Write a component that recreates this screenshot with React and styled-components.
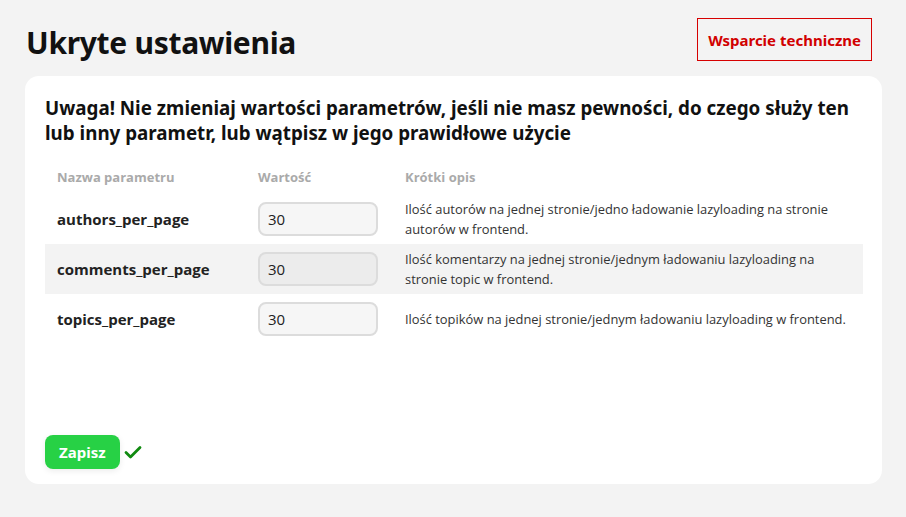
import React from "react";
import styled, { createGlobalStyle } from "styled-components";

const Global = createGlobalStyle`
  html, body { margin: 0; padding: 0; background: #f3f3f3; }
  body { font-family: "Open Sans", "Noto Sans", sans-serif; color: #111; }
`;

const Page = styled.div`
  padding: 18px 24px 32px 25px;
  display: flex;
  flex-direction: column;
`;

const Header = styled.header`
  display: flex;
  justify-content: space-between;
  align-items: flex-start;
  height: 58px;
  padding-right: 10px;
`;

const Title = styled.h1`
  margin: 6px 0 0 1px;
  font-family: "Noto Sans", "Open Sans", sans-serif;
  font-weight: 700;
  font-size: 30px;
  line-height: 38px;
  letter-spacing: -0.3px;
  color: #111;
`;

const SupportButton = styled.button`
  height: 43px;
  padding: 0 10px;
  border: 1px solid #d60000;
  background: transparent;
  color: #d10000;
  font-family: "Noto Sans", "Open Sans", sans-serif;
  font-weight: 700;
  font-size: 15px;
  cursor: pointer;
`;

const Card = styled.main`
  background: #fff;
  border-radius: 14px;
  padding: 20px 19px 15px 20px;
  height: 408px;
  box-sizing: border-box;
  display: flex;
  flex-direction: column;
`;

const Warning = styled.h2`
  margin: 0 0 14px 0;
  font-family: "Noto Sans", "Open Sans", sans-serif;
  font-weight: 700;
  font-size: 18.8px;
  line-height: 25px;
  color: #111;
`;

const Table = styled.div`
  display: flex;
  flex-direction: column;
`;

const Row = styled.div`
  display: grid;
  grid-template-columns: 201px 147px 1fr;
  align-items: center;
  min-height: ${(p) => (p.$head ? "34px" : "50px")};
  padding-left: 12px;
  background: ${(p) => (p.$alt ? "#f3f3f3" : "transparent")};
`;

const HeadCell = styled.div`
  font-size: 13px;
  font-weight: 700;
  color: #aaa;
`;

const Name = styled.div`
  font-size: 15px;
  font-weight: 700;
  color: #222;
`;

const Input = styled.input`
  width: 120px;
  height: 34px;
  box-sizing: border-box;
  border: 2px solid #dcdcdc;
  border-radius: 8px;
  background: ${(p) => (p.$alt ? "#ececec" : "#f6f6f6")};
  padding: 0 8px;
  font-family: "Open Sans", sans-serif;
  font-size: 15px;
  color: #222;
  outline: none;
`;

const Desc = styled.div`
  font-size: 12.9px;
  line-height: 20px;
  color: #333;
  padding-right: 10px;
`;

const Footer = styled.div`
  margin-top: auto;
  display: flex;
  align-items: center;
  gap: 4px;
`;

const SaveButton = styled.button`
  height: 34px;
  padding: 0 14px;
  border: none;
  border-radius: 8px;
  background: #27d145;
  color: #fff;
  font-family: "Noto Sans", "Open Sans", sans-serif;
  font-weight: 700;
  font-size: 15px;
  box-shadow: 0 2px 6px rgba(0, 0, 0, 0.08);
  cursor: pointer;
`;

const Check = () => (
  <svg width="18" height="14" viewBox="0 0 18 14">
    <path d="M2 7.5 L6.5 12 L16 2.5" fill="none" stroke="#108a10" strokeWidth="2.8" strokeLinecap="round" strokeLinejoin="round" />
  </svg>
);

const rows = [
  { name: "authors_per_page", value: "30", desc: "Ilość autorów na jednej stronie/jedno ładowanie lazyloading na stronie autorów w frontend." },
  { name: "comments_per_page", value: "30", desc: "Ilość komentarzy na jednej stronie/jednym ładowaniu lazyloading na stronie topic w frontend." },
  { name: "topics_per_page", value: "30", desc: "Ilość topików na jednej stronie/jednym ładowaniu lazyloading w frontend." },
];

export default function App() {
  return (
    <>
      <Global />
      <Page>
        <Header>
          <Title>Ukryte ustawienia</Title>
          <SupportButton>Wsparcie techniczne</SupportButton>
        </Header>
        <Card>
          <Warning>
            Uwaga! Nie zmieniaj wartości parametrów, jeśli nie masz pewności, do czego służy ten lub inny parametr, lub wątpisz w jego prawidłowe użycie
          </Warning>
          <Table>
            <Row $head>
              <HeadCell>Nazwa parametru</HeadCell>
              <HeadCell>Wartość</HeadCell>
              <HeadCell>Krótki opis</HeadCell>
            </Row>
            {rows.map((r, i) => (
              <Row key={r.name} $alt={i === 1}>
                <Name>{r.name}</Name>
                <div>
                  <Input $alt={i === 1} defaultValue={r.value} />
                </div>
                <Desc>{r.desc}</Desc>
              </Row>
            ))}
          </Table>
          <Footer>
            <SaveButton>Zapisz</SaveButton>
            <Check />
          </Footer>
        </Card>
      </Page>
    </>
  );
}
